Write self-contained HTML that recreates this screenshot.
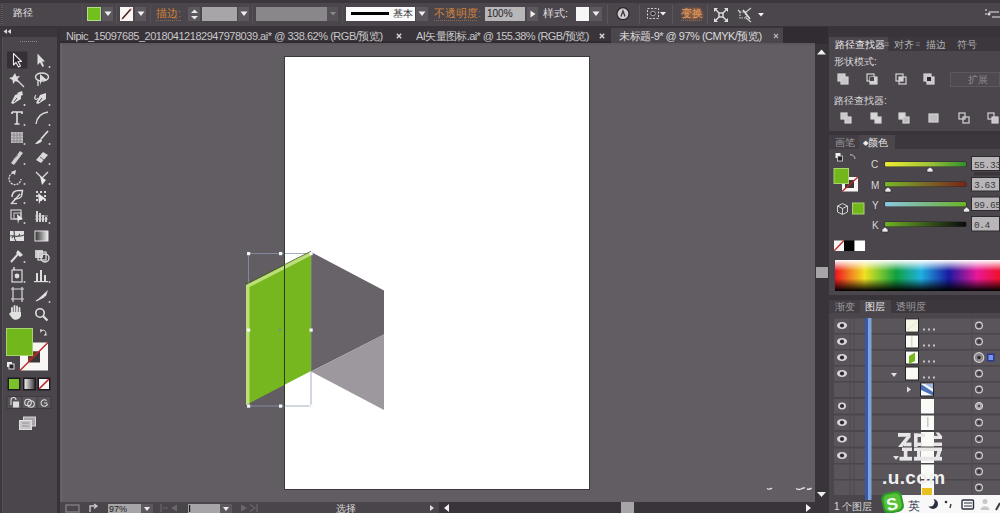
<!DOCTYPE html>
<html><head><meta charset="utf-8">
<style>
*{margin:0;padding:0;box-sizing:border-box}
html,body{width:1000px;height:513px;overflow:hidden;background:#4a464b;font-family:"Liberation Sans",sans-serif;color:#d8d6d8}
.a{position:absolute}
.t{position:absolute;white-space:nowrap;line-height:1}
</style></head><body>
<!-- top strip -->
<div class="a" style="left:0;top:0;width:1000px;height:3px;background:#3b373c"></div>
<!-- control bar -->
<div class="a" style="left:0;top:3px;width:1000px;height:23px;background:#4a464b"></div>
<div class="a" style="left:0;top:26px;width:1000px;height:2px;background:#38343a"></div>


<!-- control bar content -->
<div class="t" style="left:13px;top:7.5px;font-size:10px;color:#e6e4e6">路径</div>
<div class="a" style="left:1px;top:5px;width:2px;height:19px;background:repeating-linear-gradient(#5e5a5f 0 1px,#3e3a3f 1px 2px)"></div>
<div class="a" style="left:82px;top:5px;width:1px;height:19px;background:#545055"></div>
<div class="a" style="left:87px;top:7px;width:14px;height:14px;background:#b4dc88"></div>
<div class="a" style="left:88px;top:8px;width:12px;height:12px;background:#72c01e"></div>
<div class="a" style="left:102px;top:7px;width:11px;height:14px;background:#5c585d"></div>
<svg class="a" style="left:104px;top:11px" width="8" height="6"><polygon points="0.5,0.5 7.5,0.5 4,5" fill="#f0f0f0"/></svg>
<div class="a" style="left:116px;top:5px;width:1px;height:19px;background:#545055"></div>
<svg class="a" style="left:120px;top:7px" width="13" height="14"><rect width="13" height="14" fill="#faf6f4"/><line x1="1.5" y1="12.5" x2="11.5" y2="1.5" stroke="#d08080" stroke-width="1.2"/><line x1="2.5" y1="11.5" x2="10.5" y2="2.5" stroke="#3a2a26" stroke-width="1.3"/></svg>
<div class="a" style="left:135px;top:7px;width:11px;height:14px;background:#5c585d"></div>
<svg class="a" style="left:137px;top:11px" width="8" height="6"><polygon points="0.5,0.5 7.5,0.5 4,5" fill="#f0f0f0"/></svg>
<div class="a" style="left:150px;top:5px;width:1px;height:19px;background:#545055"></div>
<div class="t" style="left:156px;top:8px;font-size:11px;color:#d4823c">描边<span style="color:#9a7a60">:</span></div>
<div class="a" style="left:156px;top:20px;width:26px;height:1px;background:repeating-linear-gradient(90deg,#8a6a50 0 1px,transparent 1px 2px)"></div>
<div class="a" style="left:188px;top:7px;width:12px;height:14px;background:#5c585d"></div>
<svg class="a" style="left:190px;top:8px" width="9" height="13"><polygon points="1,5 8,5 4.5,1.5" fill="#e8e8e8"/><polygon points="1,8 8,8 4.5,11.5" fill="#e8e8e8"/></svg>
<div class="a" style="left:202px;top:7px;width:35px;height:14px;background:#a8a5a9"></div>
<div class="a" style="left:238px;top:7px;width:11px;height:14px;background:#5c585d"></div>
<svg class="a" style="left:240px;top:11px" width="8" height="6"><polygon points="0.5,0.5 7.5,0.5 4,5" fill="#f0f0f0"/></svg>
<div class="a" style="left:252px;top:5px;width:1px;height:19px;background:#545055"></div>
<div class="a" style="left:256px;top:7px;width:71px;height:14px;background:#8a878b"></div>
<div class="a" style="left:327px;top:7px;width:11px;height:14px;background:#555156"></div>
<svg class="a" style="left:330px;top:12px" width="6" height="4"><polygon points="0,0 6,0 3,3.5" fill="#8a878a"/></svg>
<div class="a" style="left:342px;top:5px;width:1px;height:19px;background:#545055"></div>
<div class="a" style="left:346px;top:7px;width:69px;height:14px;background:#fbfbfb"></div>
<div class="a" style="left:351px;top:12px;width:38px;height:3px;background:#000"></div>
<div class="t" style="left:393px;top:9px;font-size:10px;color:#333">基本</div>
<div class="a" style="left:416px;top:7px;width:12px;height:14px;background:#5c585d"></div>
<svg class="a" style="left:418px;top:11px" width="8" height="6"><polygon points="0.5,0.5 7.5,0.5 4,5" fill="#f0f0f0"/></svg>
<div class="t" style="left:434px;top:8px;font-size:11px;color:#d4823c">不透明度<span style="color:#9a7a60">:</span></div>
<div class="a" style="left:434px;top:20px;width:44px;height:1px;background:repeating-linear-gradient(90deg,#8a6a50 0 1px,transparent 1px 2px)"></div>
<div class="a" style="left:485px;top:7px;width:40px;height:14px;background:#b9b6ba"></div>
<div class="t" style="left:487px;top:9px;font-size:10px;color:#222">100%</div>
<div class="a" style="left:527px;top:7px;width:11px;height:14px;background:#5c585d"></div>
<svg class="a" style="left:530px;top:10px" width="6" height="8"><polygon points="0.5,0.5 5.5,4 0.5,7.5" fill="#f0f0f0"/></svg>
<div class="t" style="left:543px;top:8px;font-size:11px;color:#e0dee0">样式<span>:</span></div>
<div class="a" style="left:576px;top:7px;width:13px;height:14px;background:#f6f6f6"></div>
<div class="a" style="left:590px;top:7px;width:12px;height:14px;background:#5c585d"></div>
<svg class="a" style="left:592px;top:11px" width="8" height="6"><polygon points="0.5,0.5 7.5,0.5 4,5" fill="#f0f0f0"/></svg>
<div class="a" style="left:607px;top:5px;width:1px;height:19px;background:#5a565b"></div>
<svg class="a" style="left:615px;top:6px" width="16" height="16"><circle cx="8" cy="7.7" r="6.6" fill="#2a262b"/><circle cx="8" cy="7.7" r="5.4" fill="#cfcdcf"/><path d="M6 10.5 L8 5 L10 10.5" stroke="#3a363b" stroke-width="1.3" fill="none"/></svg>
<div class="a" style="left:639px;top:5px;width:1px;height:19px;background:#5a565b"></div>
<svg class="a" style="left:646px;top:7px" width="22" height="14"><rect x="1.5" y="1.5" width="11" height="10" fill="none" stroke="#d0d0d0" stroke-width="1" stroke-dasharray="2,1.5"/><circle cx="7" cy="6.5" r="2.3" fill="#2a262b" stroke="#c8c8c8" stroke-width="0.8"/><polygon points="14,5 20,5 17,8.5" fill="#f0f0f0"/></svg>
<div class="a" style="left:672px;top:5px;width:1px;height:19px;background:#5a565b"></div>
<div class="a" style="left:680px;top:6px;width:25px;height:16px;background:radial-gradient(ellipse at center,#8a6040 0%,#6a5048 45%,rgba(74,70,75,0) 75%)"></div>
<div class="t" style="left:681px;top:8px;font-size:11px;color:#e09a60;text-shadow:0 0 2px #c07840">变换</div>
<div class="a" style="left:681px;top:20px;width:21px;height:1px;background:repeating-linear-gradient(90deg,#8a6a50 0 1px,transparent 1px 2px)"></div>
<div class="a" style="left:707px;top:5px;width:1px;height:19px;background:#5a565b"></div>
<svg class="a" style="left:713px;top:7px" width="16" height="16"><g stroke="#e0e0e0" stroke-width="1.4" fill="none"><path d="M2 2 L6 6 M14 2 L10 6 M2 14 L6 10 M14 14 L10 10"/><rect x="6" y="6" width="4" height="4"/></g><g fill="#e0e0e0"><polygon points="1,1 5,1 1,5"/><polygon points="15,1 11,1 15,5"/><polygon points="1,15 5,15 1,11"/><polygon points="15,15 11,15 15,11"/></g></svg>
<svg class="a" style="left:737px;top:7px" width="28" height="16"><g stroke="#d0d0d0" stroke-width="1.2" fill="none"><rect x="3" y="5" width="6" height="6" stroke-dasharray="1.5,1"/><path d="M9 5 L14 1 M9 11 L14 15 M3 5 L1 3"/></g><path d="M6 3 L13 12" stroke="#e8e8e8" stroke-width="1.5"/><polygon points="21,6 27,6 24,9.5" fill="#f0f0f0"/></svg>
<svg class="a" style="left:984px;top:8px" width="16" height="16"><g fill="#9a969a"><rect x="1" y="1" width="2" height="2"/><rect x="1" y="5" width="2" height="2"/><rect x="5" y="3" width="10" height="2"/><rect x="8" y="8" width="8" height="2"/></g><circle cx="5" cy="6" r="1.5" fill="#ddd"/></svg>

<!-- left toolbar -->
<div class="a" style="left:0;top:28px;width:57px;height:485px;background:#4a464b"></div>
<div class="a" style="left:0;top:28px;width:57px;height:9px;background:#3a363b"></div>
<div class="a" style="left:0;top:37px;width:1.5px;height:476px;background:#3c383d"></div>
<div class="a" style="left:2px;top:37px;width:1px;height:476px;background:#545055"></div>
<div class="a" style="left:57px;top:28px;width:3px;height:485px;background:#363237"></div>


<!-- toolbar content -->
<svg class="a" style="left:0;top:28px" width="57" height="410" viewBox="0 28 57 410">
<g fill="#d8d6d8">
<polygon points="3.5,31.5 7,29 7,34"/><polygon points="7.5,31.5 11,29 11,34"/>
<g fill="#8a868a"><rect x="20" y="41" width="1" height="1"/><rect x="22" y="41" width="1" height="1"/><rect x="24" y="41" width="1" height="1"/><rect x="26" y="41" width="1" height="1"/><rect x="28" y="41" width="1" height="1"/><rect x="30" y="41" width="1" height="1"/><rect x="32" y="41" width="1" height="1"/><rect x="34" y="41" width="1" height="1"/><rect x="36" y="41" width="1" height="1"/></g>
</g>
<rect x="7" y="51.5" width="20.5" height="17" fill="#343035"/>
<!-- selection -->
<path d="M13.5 53.5 L13.5 65 L16 62.5 L18.5 67 L20.5 66 L18 61.5 L21.5 61.5 Z" fill="#2a262b" stroke="#e8e8e8" stroke-width="1.1" stroke-linejoin="round"/>
<path d="M37.5 53.5 L37.5 65 L40 62.5 L42.5 67 L44 66 L42 61.5 L45 61.5 Z" fill="#dcdcdc"/>
<circle cx="49.5" cy="67" r="1" fill="#ccc"/>
<!-- magic wand / lasso -->
<g stroke="#dcdcdc" fill="#dcdcdc">
<polygon points="15,73 16.5,76.5 20,76 17.5,79 19,82.5 15.5,81 13,84 12.5,80 9,78 12.5,77" stroke="none"/>
<path d="M17 80 L24 87" stroke-width="1.3" fill="none"/>
</g>
<g fill="none" stroke="#dcdcdc" stroke-width="1.4">
<ellipse cx="42" cy="77" rx="6.5" ry="4"/><path d="M38 80 L38 86"/></g>
<polygon points="40,74 47,80 42,80 40,85" fill="#dcdcdc"/>
<!-- pen -->
<g fill="#dcdcdc">
<path d="M11 103 L15 95 L21 93 L21 99 L13 104 Z"/><path d="M17 93 L22 91 L23 95 L20 96Z"/>
<circle cx="24.5" cy="105" r="1"/>
<path d="M36 103 L40 95 L46 93 L46 99 L38 104 Z"/><circle cx="49.5" cy="105" r="1"/>
</g>
<path d="M36 95 C33 99 36 101 38 98" stroke="#dcdcdc" stroke-width="1.1" fill="none"/>
<path d="M14 102 L17 98" stroke="#48444a" stroke-width="1"/>
<path d="M39 102 L42 98" stroke="#48444a" stroke-width="1"/>
<!-- type / arc -->
<path d="M12 112 L22 112 L22 114 M17 112 L17 124 M14.5 124 L19.5 124 M12 112 L12 114" stroke="#e0e0e0" stroke-width="1.6" fill="none"/>
<circle cx="24.5" cy="125" r="1" fill="#ccc"/>
<path d="M36 124 C37 117 41 113 48 112" stroke="#dcdcdc" stroke-width="1.4" fill="none"/>
<circle cx="49.5" cy="125" r="1" fill="#ccc"/>
<!-- rect / brush -->
<rect x="11" y="132" width="12" height="11" fill="#bcbabc"/>
<g stroke="#7a767a" stroke-width="0.6"><path d="M11 135 H23 M11 138 H23 M11 141 H23 M14 132 V143 M17 132 V143 M20 132 V143"/></g>
<circle cx="24.5" cy="144" r="1" fill="#ccc"/>
<path d="M48 131 L41 139" stroke="#e0e0e0" stroke-width="1.6"/>
<path d="M41 139 C38 140 37 142 35 144 C39 144 42 142 42 140 Z" fill="#e0e0e0"/>
<circle cx="49.5" cy="144" r="1" fill="#ccc"/>
<!-- pencil / eraser -->
<path d="M11 163 L20 151 L23 153 L14 165 Z" fill="#d0d0d0"/>
<path d="M13 159 L18 155" stroke="#6a666a" stroke-width="0.8"/>
<circle cx="24.5" cy="164" r="1" fill="#ccc"/>
<path d="M36 160 L43 152 L48 155 L41 163 Z" fill="#d8d8d8"/>
<path d="M40 157 L44 160" stroke="#6a666a" stroke-width="1"/>
<circle cx="49.5" cy="164" r="1" fill="#ccc"/>
<!-- rotate / reflect -->
<path d="M13 173 A6 6 0 1 0 21 179" stroke="#dcdcdc" stroke-width="1.3" fill="none" stroke-dasharray="2,1"/>
<polygon points="11,172 16,170 15,175" fill="#dcdcdc"/>
<circle cx="24.5" cy="184" r="1" fill="#ccc"/>
<path d="M36 172 L42 178 L48 172" stroke="#dcdcdc" stroke-width="1.3" fill="none"/>
<polygon points="40,176 46,180 42,185" fill="#e8e8e8"/>
<circle cx="49.5" cy="184" r="1" fill="#ccc"/>
<!-- warp / free transform -->
<path d="M12 197 C12 191 16 190.5 19 190.5 L22.5 190.5 L21.5 196 C20 199 16 199 14 199" fill="none" stroke="#dcdcdc" stroke-width="1.5"/>
<path d="M11 204 L20 194" stroke="#dcdcdc" stroke-width="1.5"/>
<path d="M11.5 203.5 L17 203.5" stroke="#d8d8d8" stroke-width="1.2"/>
<circle cx="24.5" cy="203" r="1" fill="#ccc"/>
<g fill="#d8d8d8"><rect x="36" y="191" width="2" height="2"/><rect x="40" y="191" width="2" height="2"/><rect x="44" y="191" width="2" height="2"/><rect x="36" y="195" width="2" height="2"/><rect x="44" y="195" width="2" height="2"/><rect x="36" y="199" width="2" height="2"/><rect x="40" y="199" width="2" height="2"/><rect x="44" y="199" width="2" height="2"/></g>
<polygon points="38,193 46,199 41,200 39,204" fill="#e8e8e8"/>
<!-- shape builder / perspective -->
<rect x="11" y="210" width="10" height="9" fill="none" stroke="#d0d0d0" stroke-width="1.2"/>
<rect x="14" y="213" width="7" height="6" fill="none" stroke="#d0d0d0" stroke-width="1"/>
<polygon points="17,214 23,219 19,220 18,224" fill="#e8e8e8"/>
<circle cx="24.5" cy="223" r="1" fill="#ccc"/>
<g fill="#d0d0d0"><rect x="36" y="211" width="2" height="11"/><rect x="39" y="213" width="2" height="9"/><rect x="42" y="215" width="2" height="7"/><rect x="45" y="217" width="2" height="5"/></g>
<path d="M35 216 H48 M35 219 H48" stroke="#d0d0d0" stroke-width="0.8"/>
<circle cx="49.5" cy="223" r="1" fill="#ccc"/>
<!-- mesh / gradient -->
<rect x="10" y="231" width="14" height="10" fill="#e0e0e0"/>
<path d="M12 238 C14 233 17 240 20 234 M14 231 C15 236 13 238 16 241 M10 236 C14 235 18 238 24 235" stroke="#4a464b" stroke-width="1.1" fill="none"/>
<defs><linearGradient id="gt" x1="0" x2="1"><stop offset="0" stop-color="#303030"/><stop offset="1" stop-color="#f0f0f0"/></linearGradient></defs>
<rect x="35" y="231" width="13" height="10" fill="url(#gt)" stroke="#e0e0e0" stroke-width="1"/>
<!-- eyedropper / blend -->
<path d="M11 262 L19 253" stroke="#dcdcdc" stroke-width="2"/>
<path d="M18 250 L23 255 L20 257 L16 253 Z" fill="#e0e0e0"/>
<circle cx="24.5" cy="262" r="1" fill="#ccc"/>
<rect x="35" y="250" width="8" height="8" fill="#c8c8c8"/>
<rect x="38" y="252" width="8" height="8" fill="none" stroke="#e0e0e0" stroke-width="1.2"/>
<circle cx="45" cy="258" r="4" fill="none" stroke="#e0e0e0" stroke-width="1.4"/>
<!-- symbol sprayer / graph -->
<rect x="12" y="270" width="10" height="12" fill="none" stroke="#dcdcdc" stroke-width="1.2"/>
<circle cx="17" cy="276" r="2.4" fill="#dcdcdc"/>
<path d="M14 267 L14 270" stroke="#dcdcdc" stroke-width="1.5"/>
<circle cx="24.5" cy="282" r="1" fill="#ccc"/>
<g fill="#dcdcdc"><rect x="36" y="273" width="2" height="9"/><rect x="40" y="270" width="2" height="12"/><rect x="44" y="275" width="2" height="7"/><rect x="34" y="281" width="14" height="1.2"/></g>
<circle cx="49.5" cy="282" r="1" fill="#ccc"/>
<!-- artboard / slice -->
<path d="M11 289 H24 M11 299 H24 M13 287 V302 M22 287 V302" stroke="#d8d8d8" stroke-width="1.2"/>
<path d="M36 301 L48 290 L46 296 Z" fill="#e0e0e0"/><path d="M36 301 L44 297" stroke="#e0e0e0" stroke-width="1.2"/>
<circle cx="49.5" cy="302" r="1" fill="#ccc"/>
<!-- hand / zoom -->
<path d="M12 313 L12 308 M14.5 313 L14.5 306 M17 313 L17 306.5 M19.5 313 L19.5 308" stroke="#e0e0e0" stroke-width="1.8" stroke-linecap="round"/>
<path d="M11 312 H21 L21 316 C20 320 14 321 12 318 L9 314 Z" fill="#e0e0e0"/>
<circle cx="40" cy="313" r="4.2" fill="none" stroke="#e0e0e0" stroke-width="1.6"/>
<path d="M43 316 L47.5 320.5" stroke="#e0e0e0" stroke-width="2.2"/>
<!-- fill/stroke -->
<path d="M41 331 C44 329 46 331 46 334" stroke="#dcdcdc" stroke-width="1" fill="none"/>
<polygon points="40,329 42.5,330 40.5,333" fill="#dcdcdc"/><polygon points="47.5,335 45,333.5 44,336" fill="#dcdcdc"/>
<rect x="20" y="342.5" width="28" height="28" fill="#f8f6f4"/>
<rect x="28" y="351.5" width="12" height="11" fill="#3e3538"/>
<polygon points="28,351.5 40,351.5 28,362.5" fill="#6e3a24"/>
<path d="M20 370.5 L48 342.5" stroke="#b82828" stroke-width="1.4"/>
<rect x="6" y="328" width="27" height="28" fill="#a8d470"/>
<rect x="7" y="329" width="25" height="26" fill="#72b81c"/>
<rect x="7" y="362" width="5" height="5" fill="#f0f0f0"/><rect x="9" y="364" width="5" height="5" fill="#222" stroke="#e0e0e0" stroke-width="1"/>
<!-- color mode buttons -->
<rect x="7.5" y="377.5" width="13" height="13" fill="#1e1a1f"/>
<rect x="9" y="379" width="10" height="10" fill="#7ac22a"/>
<rect x="23" y="377.5" width="13" height="13" fill="#1e1a1f"/>
<defs><linearGradient id="gt2" x1="0" x2="1"><stop offset="0" stop-color="#f0f0f0"/><stop offset="1" stop-color="#404040"/></linearGradient></defs>
<rect x="24.5" y="379" width="10" height="10" fill="url(#gt2)"/>
<rect x="37.5" y="377.5" width="13" height="13" fill="#1e1a1f"/>
<rect x="39" y="379" width="10" height="10" fill="#f8f4f4"/>
<path d="M39 389 L49 379" stroke="#c02020" stroke-width="1.6"/>
<!-- screen modes -->
<rect x="6.5" y="396" width="45" height="13" fill="#3e3a3f"/>
<rect x="7.5" y="397" width="14" height="11" fill="#555156"/>
<rect x="22.5" y="397" width="14" height="11" fill="#5a565b"/>
<rect x="37.5" y="397" width="13" height="11" fill="#555156"/>
<g fill="none" stroke="#dcdcdc" stroke-width="1.1"><path d="M11 405 V400 A2.5 2.5 0 0 1 16 400"/><rect x="13.5" y="402" width="5" height="5" fill="#dcdcdc"/>
<circle cx="28" cy="402.5" r="3.3"/><circle cx="31" cy="404" r="3.3"/><path d="M46.5 400.5 A3.3 3.3 0 1 0 47.5 404 M44 403 H47.5"/></g>
<!-- change screen -->
<rect x="23.5" y="417" width="12" height="9" fill="#a8a6a8" stroke="#d8d6d8" stroke-width="1"/>
<rect x="19.5" y="420.5" width="12" height="9" fill="#c8c6c8" stroke="#e0dee0" stroke-width="1"/>
<path d="M22 423 H29 M22 426 H29" stroke="#8a868a" stroke-width="0.8"/>
</svg>

<!-- doc tab bar -->
<div class="a" style="left:60px;top:27px;width:770px;height:17px;background:#38343a"></div>
<div class="a" style="left:60px;top:41px;width:755px;height:2px;background:#2e2a2f"></div>
<div class="a" style="left:783px;top:27px;width:45px;height:17px;background:#302c31"></div>
<div class="a" style="left:611px;top:28px;width:172px;height:16px;background:#4a464b"></div>


<div class="t" style="left:66px;top:30.5px;font-size:11px;letter-spacing:-0.47px;color:#c9c7c9">Nipic_15097685_20180412182947978039.ai* @ 338.62% (RGB/预览)</div>
<svg class="a" style="left:396px;top:33px" width="6" height="6"><path d="M0.8 0.8 L5.2 5.2 M5.2 0.8 L0.8 5.2" stroke="#d8d6d8" stroke-width="1.4"/></svg>
<div class="t" style="left:416px;top:30.5px;font-size:11px;letter-spacing:-0.6px;color:#c9c7c9">AI矢量图标.ai* @ 155.38% (RGB/预览)</div>
<svg class="a" style="left:599px;top:33px" width="6" height="6"><path d="M0.8 0.8 L5.2 5.2 M5.2 0.8 L0.8 5.2" stroke="#d8d6d8" stroke-width="1.4"/></svg>
<div class="t" style="left:619px;top:30.5px;font-size:11px;letter-spacing:-0.5px;color:#dcdadc">未标题-9* @ 97% (CMYK/预览)</div>
<svg class="a" style="left:773px;top:33px" width="6" height="6"><path d="M1 1 L5 5 M5 1 L1 5" stroke="#b4b2b4" stroke-width="1.2"/></svg>

<!-- canvas -->
<div class="a" style="left:60px;top:44px;width:755px;height:458px;background:#625d63"></div>
<div class="a" style="left:60px;top:43px;width:755px;height:2px;background:#5c585d"></div>
<div class="a" style="left:61px;top:44px;width:1px;height:458px;background:#6a666b"></div>
<!-- artboard -->
<div class="a" style="left:284px;top:56px;width:306px;height:434px;background:#3c383d"></div>
<div class="a" style="left:285px;top:57px;width:304px;height:432px;background:#ffffff"></div>


<!-- artwork -->
<svg class="a" style="left:0;top:0" width="1000" height="513" viewBox="0 0 1000 513">
<polygon points="311,252 384,290.5 384,334.5 311,371.5" fill="#686368"/>
<polygon points="311,371.5 384,334.5 384,410" fill="#9d989d"/>
<rect x="248.5" y="253.5" width="62.5" height="152.5" fill="none" stroke="#8a96b0" stroke-width="0.9" opacity="0.85"/>
<polygon points="246,285 311,252 311,371 246,405" fill="#76b720"/>
<polygon points="246,285 311,252 311,255.5 249.5,287 249.5,403.5 246,405" fill="#bcdf78"/>
<line x1="284.5" y1="252" x2="284.5" y2="406" stroke="#2d3a22" stroke-width="1"/>
<line x1="245.5" y1="284.3" x2="311" y2="251.3" stroke="#4a6224" stroke-width="0.9"/>
<g fill="#f4f6fa">
<rect x="247" y="252" width="3.2" height="3.2"/><rect x="279" y="252" width="3.2" height="3.2"/><rect x="309.5" y="252" width="3.2" height="3.2"/>
<rect x="247" y="328.5" width="3.2" height="3.2"/><rect x="309.5" y="328.5" width="3.2" height="3.2"/>
<rect x="247" y="404.5" width="3.2" height="3.2"/><rect x="279" y="404.5" width="3.2" height="3.2"/><rect x="309.5" y="404.5" width="3.2" height="3.2"/>
</g>
<rect x="279" y="329" width="2" height="2" fill="#6f86b0"/>
</svg>

<svg class="a" style="left:760px;top:484px" width="55" height="10" viewBox="760 484 55 10">
<path d="M767 488.5 Q769.5 490 772 488" stroke="#e8e6e8" stroke-width="1.4" fill="none"/>
<path d="M796 488.5 Q799 490.5 802 488.5 Q804 487.5 805 488" stroke="#e8e6e8" stroke-width="1.4" fill="none"/>
<path d="M807 489 Q809.5 490 811.5 488" stroke="#e8e6e8" stroke-width="1.4" fill="none"/>
</svg>
<!-- status bar -->
<div class="a" style="left:60px;top:502px;width:379px;height:11px;background:#4a454a"></div>
<div class="a" style="left:439px;top:502px;width:376px;height:11px;background:#38343a"></div>

<!-- vertical scrollbar -->
<div class="a" style="left:815px;top:44px;width:13px;height:469px;background:#38343a"></div>


<!-- status bar items -->
<svg class="a" style="left:60px;top:502px" width="380" height="11" viewBox="60 502 380 11">
<rect x="66" y="505" width="13" height="7" fill="none" stroke="#8a868a" stroke-width="1.2"/>
<path d="M90 512 L90 506 L97 506 M94 504 L97 506 L94 508.5" stroke="#c8c6c8" stroke-width="1.4" fill="none"/>
<rect x="108" y="504" width="33" height="9" fill="#a8a5a9"/>
<text x="109" y="512" font-size="9" fill="#222" font-family="Liberation Sans">97%</text>
<rect x="141" y="504" width="12" height="9" fill="#5c585d"/>
<polygon points="144,507 150,507 147,511" fill="#eee"/>
<path d="M161 504 V512 M168 508 L163 508" stroke="#6a666b" stroke-width="1.2"/>
<polygon points="171,508 177,504.5 177,511.5" fill="#6a666b"/>
<rect x="188" y="504" width="32" height="9" fill="#a8a5a9"/>
<rect x="189" y="505" width="1.2" height="7" fill="#222"/>
<rect x="220" y="504" width="12" height="9" fill="#5c585d"/>
<polygon points="223,507 229,507 226,511" fill="#eee"/>
<polygon points="241,504.5 247,508 241,511.5" fill="#6a666b"/>
<path d="M250 504.5 L255 508 L250 511.5 M257 504 V512" stroke="#6a666b" stroke-width="1.2" fill="none"/>
<polygon points="430,505 434,508 430,511" fill="#dcdcdc"/>
</svg>
<div class="t" style="left:336px;top:504px;font-size:10px;color:#dcdadc">选择</div>
<!-- horizontal scrollbar -->
<svg class="a" style="left:439px;top:502px" width="376" height="11" viewBox="439 502 376 11">
<polygon points="444,508 449,504 449,512" fill="#f0f0f0"/>
<rect x="621" y="502" width="13" height="11" fill="#a8a5a9"/>
<polygon points="811,508 806,504 806,512" fill="#f0f0f0"/>
</svg>
<!-- vertical scrollbar items -->
<svg class="a" style="left:815px;top:44px" width="14" height="469" viewBox="815 44 14 469">
<polygon points="817,54.5 821.5,49.5 826,54.5" fill="#f0f0f0"/>
<rect x="816" y="267" width="12" height="11" fill="#a8a5a9"/>
<polygon points="817,492 826,492 821.5,497" fill="#f0f0f0"/>
</svg>

<!-- right panel column -->
<div class="a" style="left:828px;top:28px;width:172px;height:485px;background:#38343a"></div>
<!-- panel 1 pathfinder -->
<div class="a" style="left:829px;top:37px;width:171px;height:94px;background:#4a464b"></div>
<div class="a" style="left:888px;top:37px;width:112px;height:14px;background:#3b373c"></div>
<div class="t" style="left:835px;top:40px;font-size:10px;color:#eceaec">路径查找器</div>
<div class="t" style="left:884px;top:40px;font-size:9px;color:#8a868a">≡</div>
<div class="t" style="left:894px;top:40px;font-size:10px;color:#b4b2b4">对齐</div>
<div class="t" style="left:915px;top:40px;font-size:9px;color:#7a767a">≡</div>
<div class="t" style="left:926px;top:40px;font-size:10px;color:#b4b2b4">描边</div>
<div class="t" style="left:957px;top:40px;font-size:10px;color:#b4b2b4">符号</div>
<div class="t" style="left:834px;top:57px;font-size:10px;color:#dcdadc">形状模式:</div>
<div class="t" style="left:834px;top:96px;font-size:10px;color:#dcdadc">路径查找器:</div>
<div class="a" style="left:950px;top:72px;width:50px;height:15px;background:#4e4a4f;border:1px solid #5c585d"></div>
<div class="t" style="left:968px;top:75px;font-size:10px;color:#8a868a">扩展</div>
<svg class="a" style="left:829px;top:60px" width="171" height="70" viewBox="829 60 171 70">
<g stroke="#d4d2d4" stroke-width="1.2" fill="none">
<!-- shape modes -->
<rect x="838" y="74" width="7" height="7" fill="#c8c6c8"/><rect x="841" y="77" width="7" height="7" fill="#c8c6c8"/>
<rect x="867" y="74" width="7" height="7"/><rect x="870" y="77" width="7" height="7" fill="#d4d2d4"/><rect x="870" y="77" width="4" height="4" fill="#4a464b" stroke="none"/>
<rect x="896" y="74" width="7" height="7"/><rect x="899" y="77" width="7" height="7"/><rect x="899" y="77" width="4" height="4" fill="#d4d2d4" stroke="none"/>
<rect x="924" y="74" width="7" height="7" fill="#c8c6c8"/><rect x="927" y="77" width="7" height="7" fill="#c8c6c8"/><rect x="927" y="77" width="4" height="4" fill="#2a262b" stroke="none"/>
<!-- pathfinders -->
<rect x="841" y="113" width="6" height="6" fill="#c8c6c8"/><rect x="845" y="117" width="6" height="6" fill="#c8c6c8"/>
<rect x="871" y="113" width="6" height="6" fill="#d8d8d8"/><rect x="875" y="117" width="6" height="6" fill="#d8d8d8"/>
<rect x="899" y="113" width="6" height="6" fill="#d8d8d8"/><rect x="903" y="117" width="6" height="6" fill="#bbb"/>
<rect x="929" y="114" width="9" height="8" fill="#c0bec0"/>
<rect x="959" y="113" width="6" height="6"/><rect x="963" y="117" width="6" height="6"/>
<rect x="988" y="113" width="6" height="6"/><rect x="992" y="117" width="6" height="6" fill="#c8c6c8"/>
</g>
</svg>

<!-- panel 2 color -->
<div class="a" style="left:829px;top:135px;width:171px;height:160px;background:#4a464b"></div>
<div class="a" style="left:829px;top:135px;width:171px;height:14px;background:#3b373c"></div>
<div class="a" style="left:829px;top:135px;width:30px;height:14px;background:#423e43"></div>
<div class="a" style="left:859px;top:135px;width:36px;height:14px;background:#4a464b"></div>
<div class="t" style="left:835px;top:138px;font-size:10px;color:#9e9c9e">画笔</div>
<div class="t" style="left:863px;top:138px;font-size:10px;color:#eceaec"><span style="font-size:7px;vertical-align:1px">◆</span>颜色</div>
<svg class="a" style="left:829px;top:149px" width="171" height="146" viewBox="829 149 171 146">
<rect x="835.5" y="153" width="5" height="5" fill="#f0f0f0"/><rect x="837.5" y="156" width="5" height="5" fill="#222" stroke="#ddd" stroke-width="0.8"/>
<path d="M850 155 C853 154 855 157 855 159" stroke="#ccc" stroke-width="1" fill="none"/>
<rect x="842" y="177" width="16" height="14.5" fill="#f8f6f4"/>
<rect x="845" y="180" width="9" height="8" fill="#3e3538"/>
<path d="M842 191.5 L858 177" stroke="#b82828" stroke-width="1.3"/>
<rect x="833.5" y="168" width="15.5" height="16" fill="#a8d470"/>
<rect x="834.5" y="169" width="13.5" height="14" fill="#72b81c"/>
<!-- cube -->
<g stroke="#d0d0d0" stroke-width="1" fill="none"><path d="M837.5 206 L842.5 203.5 L847.5 206 L847.5 212 L842.5 214.5 L837.5 212 Z M837.5 206 L842.5 208.5 L847.5 206 M842.5 208.5 L842.5 214.5"/></g>
<rect x="852" y="202.5" width="12.5" height="12" fill="#a8d470"/>
<rect x="853" y="203.5" width="10.5" height="10" fill="#72b81c"/>
<!-- labels -->
<text x="871" y="168" font-size="10" fill="#d8d6d8" font-family="Liberation Sans">C</text>
<text x="871" y="189" font-size="10" fill="#d8d6d8" font-family="Liberation Sans">M</text>
<text x="872" y="209" font-size="10" fill="#d8d6d8" font-family="Liberation Sans">Y</text>
<text x="872" y="229" font-size="10" fill="#d8d6d8" font-family="Liberation Sans">K</text>
<defs>
<linearGradient id="gc" x1="0" x2="1"><stop offset="0" stop-color="#f0ee30"/><stop offset="0.5" stop-color="#a8c838"/><stop offset="1" stop-color="#30902c"/></linearGradient>
<linearGradient id="gm" x1="0" x2="1"><stop offset="0" stop-color="#78b828"/><stop offset="0.5" stop-color="#7a6a28"/><stop offset="1" stop-color="#7a2418"/></linearGradient>
<linearGradient id="gy" x1="0" x2="1"><stop offset="0" stop-color="#8cc8e0"/><stop offset="0.5" stop-color="#7ab888"/><stop offset="1" stop-color="#6cb424"/></linearGradient>
<linearGradient id="gk" x1="0" x2="1"><stop offset="0" stop-color="#70b424"/><stop offset="0.6" stop-color="#304a1a"/><stop offset="1" stop-color="#0a0a0a"/></linearGradient>
<linearGradient id="spec" x1="0" x2="1">
<stop offset="0" stop-color="#f01020"/><stop offset="0.1" stop-color="#f08a20"/><stop offset="0.18" stop-color="#f0e020"/><stop offset="0.27" stop-color="#80c830"/><stop offset="0.37" stop-color="#10a040"/><stop offset="0.52" stop-color="#20b0e0"/><stop offset="0.69" stop-color="#1a1aa0"/><stop offset="0.86" stop-color="#e81898"/><stop offset="1" stop-color="#f01028"/></linearGradient>
<linearGradient id="specv" x1="0" y1="0" x2="0" y2="1"><stop offset="0" stop-color="#fff" stop-opacity="1"/><stop offset="0.35" stop-color="#fff" stop-opacity="0"/><stop offset="0.6" stop-color="#000" stop-opacity="0"/><stop offset="1" stop-color="#000" stop-opacity="1"/></linearGradient>
</defs>
<rect x="884.5" y="161.5" width="82" height="5.5" rx="1.5" fill="#2a262b"/><rect x="885" y="162" width="81" height="4.5" rx="1" fill="url(#gc)"/>
<rect x="884.5" y="181.5" width="82" height="5.5" rx="1.5" fill="#2a262b"/><rect x="885" y="182" width="81" height="4.5" rx="1" fill="url(#gm)"/>
<rect x="884.5" y="201.5" width="82" height="5.5" rx="1.5" fill="#2a262b"/><rect x="885" y="202" width="81" height="4.5" rx="1" fill="url(#gy)"/>
<rect x="884.5" y="221.5" width="82" height="5.5" rx="1.5" fill="#2a262b"/><rect x="885" y="222" width="81" height="4.5" rx="1" fill="url(#gk)"/>
<g fill="#ecebec" stroke="#2a262b" stroke-width="0.6"><path d="M927 172 L927 169.5 L930 167 L933 169.5 L933 172 Z"/><path d="M885 192 L885 189.5 L888 187 L891 189.5 L891 192 Z"/><path d="M963.5 212 L963.5 209.5 L966.5 207 L969.5 209.5 L969.5 212 Z"/><path d="M882 232 L882 229.5 L885 227 L888 229.5 L888 232 Z"/></g>
<g stroke="#2e2a2f" stroke-width="1" fill="#b9b6b9">
<rect x="971.5" y="156.5" width="28" height="14"/>
<rect x="971.5" y="177.5" width="28" height="13.5"/>
<rect x="971.5" y="197" width="28" height="13.5"/>
<rect x="971.5" y="216.5" width="28" height="14.5"/>
</g>
<rect x="974" y="172" width="26" height="3.5" fill="#3a363b"/>
<text x="974" y="167.5" font-size="9.5" fill="#3a3a3a" font-family="Liberation Mono" letter-spacing="-0.4">55.33</text>
<text x="974" y="188" font-size="9.5" fill="#3a3a3a" font-family="Liberation Mono" letter-spacing="-0.4">3.63</text>
<text x="974" y="207.5" font-size="9.5" fill="#3a3a3a" font-family="Liberation Mono" letter-spacing="-0.4">99.65</text>
<text x="974" y="227.5" font-size="9.5" fill="#3a3a3a" font-family="Liberation Mono" letter-spacing="-0.4">0.4</text>
<!-- swatches -->
<rect x="834" y="240.5" width="10" height="10.5" fill="#f8f6f4"/><path d="M834 251 L844 240.5" stroke="#b82828" stroke-width="1.2"/>
<rect x="844" y="240.5" width="10.5" height="10.5" fill="#050505"/>
<rect x="854.5" y="240.5" width="10.5" height="10.5" fill="#ffffff"/>
<!-- spectrum -->
<rect x="835" y="260" width="165" height="31" fill="url(#spec)"/>
<rect x="835" y="260" width="165" height="31" fill="url(#specv)"/>
</svg>

<!-- panel 3 layers -->
<div class="a" style="left:829px;top:300px;width:171px;height:213px;background:#4a464b"></div>
<div class="a" style="left:829px;top:300px;width:171px;height:13px;background:#3b373c"></div>
<div class="a" style="left:829px;top:300px;width:31px;height:13px;background:#423e43"></div>
<div class="a" style="left:860px;top:300px;width:31px;height:13px;background:#4a464b"></div>
<div class="t" style="left:835px;top:302px;font-size:10px;color:#9e9c9e">渐变</div>
<div class="t" style="left:865px;top:302px;font-size:10px;color:#eceaec">图层</div>
<div class="t" style="left:896px;top:302px;font-size:10px;color:#9e9c9e">透明度</div>
<div class="a" style="left:829px;top:313px;width:171px;height:4px;background:#4a464b"></div>
<svg class="a" style="left:829px;top:313px" width="171" height="190" viewBox="829 313 171 190">
<rect x="834" y="317" width="166" height="183" fill="#4a464b"/>
<rect x="834" y="318.5" width="166" height="14.5" fill="#5a555b"/>
<rect x="834" y="334.5" width="166" height="14.5" fill="#5a555b"/>
<rect x="834" y="350.5" width="166" height="14.5" fill="#5a555b"/>
<rect x="834" y="366.5" width="166" height="14.5" fill="#5a555b"/>
<rect x="834" y="382.5" width="166" height="14.5" fill="#5a555b"/>
<rect x="834" y="399" width="166" height="14.5" fill="#5a555b"/>
<rect x="834" y="415.5" width="166" height="14.5" fill="#5a555b"/>
<rect x="834" y="432" width="166" height="14.5" fill="#5a555b"/>
<rect x="834" y="448.5" width="166" height="14.5" fill="#5a555b"/>
<rect x="834" y="464.5" width="166" height="14.5" fill="#5a555b"/>
<rect x="834" y="480.5" width="166" height="14.5" fill="#5a555b"/>
<path d="M850 318.5 V333.0 M854 318.5 V333.0 M972 318.5 V333.0" stroke="#4e4a4f" stroke-width="1"/>
<ellipse cx="842" cy="325.5" rx="5" ry="3.4" fill="#d8d6d8"/><circle cx="842" cy="325.5" r="2.1" fill="#2e2a2f"/>
<circle cx="979" cy="325.5" r="3.4" fill="none" stroke="#d8d6d8" stroke-width="1.1"/><circle cx="979" cy="325.5" r="1.2" fill="#2e2a2f"/>
<rect x="905" y="318.5" width="14" height="14" fill="#222"/><rect x="906" y="319.5" width="12" height="12" fill="#fafaf4"/>
<g fill="#c4c2c4"><rect x="923" y="328.5" width="2" height="2"/><rect x="928" y="328.5" width="2" height="2"/><rect x="933" y="328.5" width="2" height="2"/></g>
<path d="M850 334.5 V349.0 M854 334.5 V349.0 M972 334.5 V349.0" stroke="#4e4a4f" stroke-width="1"/>
<ellipse cx="842" cy="341.5" rx="5" ry="3.4" fill="#d8d6d8"/><circle cx="842" cy="341.5" r="2.1" fill="#2e2a2f"/>
<circle cx="979" cy="341.5" r="3.4" fill="none" stroke="#d8d6d8" stroke-width="1.1"/><circle cx="979" cy="341.5" r="1.2" fill="#2e2a2f"/>
<rect x="905" y="334.5" width="14" height="14" fill="#222"/><rect x="906" y="335.5" width="12" height="12" fill="#fafaf4"/>
<g fill="#c4c2c4"><rect x="923" y="344.5" width="2" height="2"/><rect x="928" y="344.5" width="2" height="2"/><rect x="933" y="344.5" width="2" height="2"/></g>
<path d="M850 350.5 V365.0 M854 350.5 V365.0 M972 350.5 V365.0" stroke="#4e4a4f" stroke-width="1"/>
<ellipse cx="842" cy="357.5" rx="5" ry="3.4" fill="#d8d6d8"/><circle cx="842" cy="357.5" r="2.1" fill="#2e2a2f"/>
<circle cx="979" cy="357.5" r="4.8" fill="#8a878a" stroke="#d0ced0" stroke-width="1.2"/><circle cx="979" cy="357.5" r="1.8" fill="#2e2a2f"/>
<rect x="987" y="353.5" width="7.5" height="8" fill="#2a3a90"/><rect x="988.5" y="355.0" width="4.5" height="5" fill="#7a92f0"/>
<rect x="905" y="350.5" width="14" height="14" fill="#222"/><rect x="906" y="351.5" width="12" height="12" fill="#fafaf4"/>
<g fill="#c4c2c4"><rect x="923" y="360.5" width="2" height="2"/><rect x="928" y="360.5" width="2" height="2"/><rect x="933" y="360.5" width="2" height="2"/></g>
<path d="M850 366.5 V381.0 M854 366.5 V381.0 M972 366.5 V381.0" stroke="#4e4a4f" stroke-width="1"/>
<ellipse cx="842" cy="373.5" rx="5" ry="3.4" fill="#d8d6d8"/><circle cx="842" cy="373.5" r="2.1" fill="#2e2a2f"/>
<circle cx="979" cy="373.5" r="3.4" fill="none" stroke="#d8d6d8" stroke-width="1.1"/><circle cx="979" cy="373.5" r="1.2" fill="#2e2a2f"/>
<rect x="905" y="366.5" width="14" height="14" fill="#222"/><rect x="906" y="367.5" width="12" height="12" fill="#fafaf4"/>
<g fill="#c4c2c4"><rect x="923" y="376.5" width="2" height="2"/><rect x="928" y="376.5" width="2" height="2"/><rect x="933" y="376.5" width="2" height="2"/></g>
<path d="M850 382.5 V397.0 M854 382.5 V397.0 M972 382.5 V397.0" stroke="#4e4a4f" stroke-width="1"/>
<circle cx="979" cy="389.5" r="3.4" fill="none" stroke="#d8d6d8" stroke-width="1.1"/><circle cx="979" cy="389.5" r="1.2" fill="#2e2a2f"/>
<rect x="920" y="382.5" width="14" height="14" fill="#222"/><rect x="921" y="383.5" width="12" height="12" fill="#f4f6fa"/>
<path d="M850 399 V413.5 M854 399 V413.5 M972 399 V413.5" stroke="#4e4a4f" stroke-width="1"/>
<ellipse cx="842" cy="406" rx="4" ry="3.4" fill="#d8d6d8"/><circle cx="842" cy="406" r="2.1" fill="#2e2a2f"/>
<circle cx="979" cy="406" r="3.6" fill="#a8a6a8" stroke="#dcdadc" stroke-width="1"/><circle cx="979" cy="406" r="1.2" fill="#4a464b"/>
<rect x="921" y="399" width="13" height="14.5" fill="#fafaf6"/>
<path d="M850 415.5 V430.0 M854 415.5 V430.0 M972 415.5 V430.0" stroke="#4e4a4f" stroke-width="1"/>
<ellipse cx="842" cy="422.5" rx="5" ry="3.4" fill="#d8d6d8"/><circle cx="842" cy="422.5" r="2.1" fill="#2e2a2f"/>
<circle cx="979" cy="422.5" r="3.4" fill="none" stroke="#d8d6d8" stroke-width="1.1"/><circle cx="979" cy="422.5" r="1.2" fill="#2e2a2f"/>
<rect x="921" y="415.5" width="13" height="14.5" fill="#fafaf6"/>
<path d="M850 432 V446.5 M854 432 V446.5 M972 432 V446.5" stroke="#4e4a4f" stroke-width="1"/>
<ellipse cx="842" cy="439" rx="5" ry="3.4" fill="#d8d6d8"/><circle cx="842" cy="439" r="2.1" fill="#2e2a2f"/>
<circle cx="979" cy="439" r="3.4" fill="none" stroke="#d8d6d8" stroke-width="1.1"/><circle cx="979" cy="439" r="1.2" fill="#2e2a2f"/>
<rect x="921" y="432" width="13" height="14.5" fill="#fafaf6"/>
<path d="M850 448.5 V463.0 M854 448.5 V463.0 M972 448.5 V463.0" stroke="#4e4a4f" stroke-width="1"/>
<ellipse cx="842" cy="455.5" rx="5" ry="3.4" fill="#d8d6d8"/><circle cx="842" cy="455.5" r="2.1" fill="#2e2a2f"/>
<circle cx="979" cy="455.5" r="3.4" fill="none" stroke="#d8d6d8" stroke-width="1.1"/><circle cx="979" cy="455.5" r="1.2" fill="#2e2a2f"/>
<rect x="921" y="448.5" width="13" height="14.5" fill="#fafaf6"/>
<path d="M850 464.5 V479.0 M854 464.5 V479.0 M972 464.5 V479.0" stroke="#4e4a4f" stroke-width="1"/>
<circle cx="979" cy="471.5" r="3.4" fill="none" stroke="#d8d6d8" stroke-width="1.1"/><circle cx="979" cy="471.5" r="1.2" fill="#2e2a2f"/>
<rect x="921" y="464.5" width="13" height="14.5" fill="#fafaf6"/>
<path d="M850 480.5 V495.0 M854 480.5 V495.0 M972 480.5 V495.0" stroke="#4e4a4f" stroke-width="1"/>
<circle cx="979" cy="487.5" r="3.4" fill="none" stroke="#d8d6d8" stroke-width="1.1"/><circle cx="979" cy="487.5" r="1.2" fill="#2e2a2f"/>
<rect x="921" y="480.5" width="13" height="14.5" fill="#fafaf6"/>
<rect x="865" y="318" width="3" height="182" fill="#3a58a8"/><rect x="868" y="318" width="3.5" height="182" fill="#7ea2dc"/>
<path d="M907 330 L917 322" stroke="#d0e0a0" stroke-width="1"/><rect x="906" y="319.5" width="12" height="12" fill="#f0f0d8" opacity="0.5"/>
<rect x="911" y="336.5" width="1.5" height="10" fill="#d8d8c8"/>
<polygon points="909,356 915,352.5 915,361 909,364" fill="#76b720"/>
<polygon points="891,373 897,373 894,377" fill="#e0e0e0"/>
<polygon points="907,386.5 911,389.5 907,392.5" fill="#e0e0e0"/>
<polygon points="921,384 933,392 933,395.5 921,390" fill="#4a70b8"/><polygon points="925,384 933,384 933,389" fill="#a0b8e0"/>
<rect x="927" y="417" width="1.5" height="10" fill="#c8c8c8"/>
<polygon points="893,456 899,456 896,460" fill="#e0e0e0"/>
<rect x="922" y="488" width="10" height="8" fill="#e8c020"/>
</svg>
<div class="t" style="left:834px;top:502px;font-size:10px;color:#dcdadc">1 个图层</div>


<!-- watermark + IME -->
<svg class="a" style="left:890px;top:428px" width="60" height="40" viewBox="890 428 60 40">
<g fill="#e8e6e8">
<rect x="898" y="433" width="12.5" height="3.8"/>
<polygon points="906.5,436.5 911,436.5 902.5,447 898,447"/>
<rect x="904" y="442.5" width="7.5" height="3.8"/>
<rect x="902" y="447.5" width="10" height="3.5"/>
<rect x="903.8" y="450" width="3.6" height="8"/>
<rect x="899.5" y="456.8" width="12.5" height="3.8"/>
<rect x="914" y="433.5" width="3.6" height="13.5"/>
<rect x="914" y="433.5" width="11" height="3.5"/>
<rect x="914" y="442.5" width="8" height="3.5"/>
<rect x="933.5" y="435.8" width="8.5" height="3.2"/>
<rect x="933.5" y="442.5" width="8.5" height="3.5"/>
<polygon points="935.5,432.5 939,432.5 942.5,437 939,437"/>
<rect x="914" y="447.5" width="28" height="3.5"/>
<rect x="917" y="450" width="3.5" height="7.5"/>
<polygon points="937.5,450.5 941.5,450.5 939.5,457.5 935.5,457.5"/>
<rect x="914" y="456.8" width="28" height="3.8"/>
</g>
</svg>
<div class="t" style="left:882px;top:468px;font-size:19px;color:#f0f0f0;letter-spacing:0.4px;font-weight:bold">.u.com</div>
<div class="a" style="left:892px;top:495px;width:108px;height:18px;background:#f8f8f8"></div>
<svg class="a" style="left:880px;top:490px" width="120" height="23" viewBox="880 490 120 23">
<g transform="rotate(-12 892 502)"><rect x="882" y="492" width="21" height="21" rx="6" fill="#2e9a2a"/><rect x="884" y="494" width="17" height="17" rx="5" fill="#56c038"/><text x="886" y="510" font-size="17" font-weight="bold" fill="#f4fff0" font-family="Liberation Sans">S</text></g>
<text x="908" y="509.5" font-size="12" fill="#3a4050" font-family="Liberation Sans">英</text>
<circle cx="933" cy="504" r="5" fill="#2a3040"/><circle cx="929.8" cy="501.8" r="4.8" fill="#f8f8f8"/>
<circle cx="946" cy="502" r="1.3" fill="#2a3040"/><path d="M951 504 L950 508" stroke="#2a3040" stroke-width="1.3"/>
<rect x="962" y="500" width="11.5" height="9" rx="1" fill="none" stroke="#2a3040" stroke-width="1.4"/>
<path d="M964 503 H972 M964 506 H972" stroke="#2a3040" stroke-width="1"/>
<circle cx="985" cy="501.5" r="2.5" fill="#c8c8c8"/><path d="M980.5 510 C981 505 989 505 989.5 510 Z" fill="#c8c8c8"/>
<path d="M996 510 L1000 503" stroke="#3a3a3a" stroke-width="2"/>
</svg>

</body></html>
